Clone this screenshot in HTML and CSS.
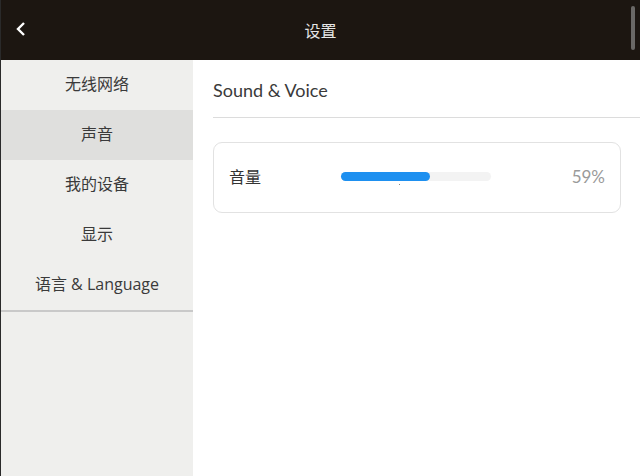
FILE: index.html
```html
<!DOCTYPE html>
<html lang="zh">
<head>
    <meta charset="UTF-8">
    <title>设置</title>
    <link rel="stylesheet" href="styles.css">
</head>
<body>
    <div class="app-header">
        <button class="back-btn">
            <svg width="12" height="16" viewBox="0 0 12 16"><path d="M9 2 L3 8 L9 14" fill="none" stroke="#fff" stroke-width="2.4"/></svg>
        </button>
        <h1>设置</h1>
        <div class="scroll-thumb"></div>
    </div>

    <div class="layout">
        <div class="sidebar">
            <div class="menu">
                <div class="menu-item">无线网络</div>
                <div class="menu-item active">声音</div>
                <div class="menu-item">我的设备</div>
                <div class="menu-item">显示</div>
                <div class="menu-item">语言 &amp; Language</div>
            </div>
        </div>
        <div class="content">
            <div class="section-header">Sound &amp; Voice</div>
            <div class="card">
                <span class="card-label">音量</span>
                <div class="slider">
                    <div class="slider-track">
                        <div class="slider-fill" style="width: 59%"></div>
                    </div>
                    <div class="slider-tick"></div>
                </div>
                <span class="card-value">59%</span>
            </div>
        </div>
    </div>
</body>
</html>
```

FILE: styles.css
```css
:root {
    --header-bg: #1c1611;
    --sidebar-bg: #efefed;
    --active-bg: #dfdfdd;
    --border-color: #e2e2e2;
    --text-color: #333333;
    --text-secondary: #9a9a9a;
    --accent: #1e90f0;
}

* {
    box-sizing: border-box;
    margin: 0;
    padding: 0;
}

html, body {
    height: 100%;
}

body {
    font-family: Lato, "Noto Sans", "Noto Sans CJK SC", sans-serif;
    color: var(--text-color);
    background: #ffffff;
    border-left: 1px solid #2a2a2a;
    display: flex;
    flex-direction: column;
    overflow: hidden;
}

.app-header {
    height: 60px;
    flex-shrink: 0;
    background: var(--header-bg);
    display: flex;
    align-items: center;
    justify-content: center;
    position: relative;
}

.app-header h1 {
    font-family: "Noto Sans CJK SC", sans-serif;
    font-size: 16px;
    font-weight: 400;
    line-height: 1;
    color: #e6e6e6;
}

.back-btn {
    position: absolute;
    left: 14px;
    top: 21px;
    background: none;
    border: none;
    display: flex;
}

.scroll-thumb {
    position: absolute;
    right: 5px;
    top: 6px;
    width: 4px;
    height: 44px;
    border-radius: 2px;
    background: #6a6866;
}

.layout {
    flex: 1;
    display: flex;
}

.sidebar {
    width: 192px;
    background: var(--sidebar-bg);
}

.menu {
    border-bottom: 2px solid #c9c9c9;
}

.menu-item {
    height: 50px;
    padding-bottom: 3px;
    display: flex;
    align-items: center;
    justify-content: center;
    font-family: "Open Sans", "Noto Sans CJK SC", sans-serif;
    font-size: 16px;
    line-height: 1;
    color: #3a3a3a;
}

.menu-item.active {
    background: var(--active-bg);
}

.content {
    flex: 1;
    padding-left: 20px;
}

.section-header {
    height: 58px;
    padding-top: 19px;
    font-size: 18px;
    color: #3a3a3a;
    border-bottom: 1px solid #dcdcdc;
}

.card {
    margin: 24px 19px 0 0;
    height: 71px;
    border: 1px solid var(--border-color);
    border-radius: 9px;
    display: flex;
    align-items: center;
    padding: 0 15px 3px 15px;
}

.card-label {
    font-family: "Noto Sans CJK SC", sans-serif;
    font-size: 16px;
    line-height: 1;
    width: 112px;
}

.slider {
    width: 150px;
    position: relative;
}

.slider-track {
    height: 9px;
    border-radius: 5px;
    background: #f3f3f3;
}

.slider-fill {
    height: 100%;
    border-radius: 5px;
    background: var(--accent);
}

.slider-tick {
    position: absolute;
    left: 58px;
    top: 12px;
    width: 1px;
    height: 1px;
    background: #888;
}

.card-value {
    margin-left: auto;
    font-size: 17px;
    color: var(--text-secondary);
}
```
